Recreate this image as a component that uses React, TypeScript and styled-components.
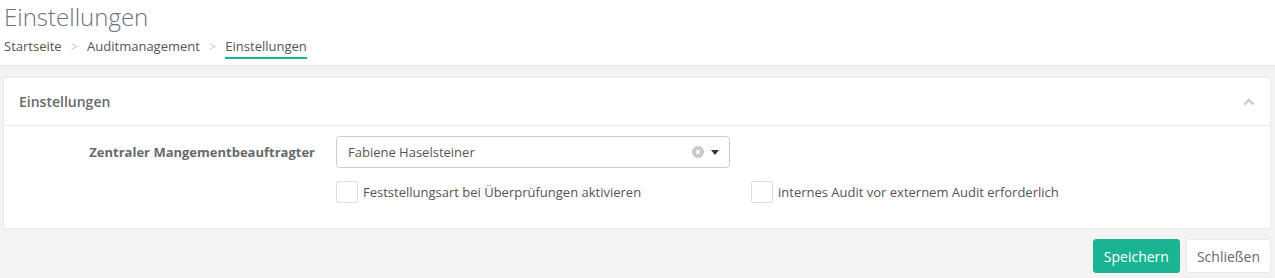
import React from "react";
import styled, { createGlobalStyle } from "styled-components";

const Global = createGlobalStyle`
  html, body { margin: 0; padding: 0; background: #f3f3f4; }
  body { font-family: "Open Sans", "Liberation Sans", sans-serif; color: #676a6c; }
  * { box-sizing: border-box; }
`;

const Page = styled.div`
  width: 1275px;
  height: 278px;
  background: #f3f3f4;
  overflow: hidden;
`;

const Heading = styled.div`
  background: #fff;
  height: 66px;
  padding: 2px 4px 0;
  border-bottom: 1px solid #e7eaec;
`;

const Title = styled.h2`
  margin: 0;
  font-size: 24px;
  font-weight: 300;
  line-height: 29px;
  color: #6b7380;
`;

const Crumbs = styled.ol`
  display: flex;
  list-style: none;
  margin: 5px 0 0;
  padding: 0;
  font-size: 13px;
  line-height: 20px;
  color: #555;
`;

const Crumb = styled.li<{ $active?: boolean }>`
  display: flex;
  align-items: center;
  span {
    border-bottom: 2px solid ${(p) => (p.$active ? "#1ab394" : "transparent")};
    padding-bottom: 1px;
  }
  &:not(:last-child)::after {
    content: ">";
    color: #ccc;
    padding: 0 9px 3px 9px;
  }
`;

const Body = styled.div`
  padding: 11px 4px 0 3px;
`;

const Panel = styled.section`
  background: #fff;
  border: 1px solid #e7eaec;
`;

const PanelHeader = styled.div`
  display: flex;
  align-items: center;
  justify-content: space-between;
  height: 48px;
  padding: 0 15px;
  border-bottom: 1px solid #e7eaec;
`;

const PanelTitle = styled.h5`
  margin: 0;
  font-size: 14px;
  font-weight: 600;
  color: #676a6c;
`;

const Collapse = styled.button`
  border: 0;
  background: none;
  padding: 0;
  display: flex;
  color: #c4c4c4;
`;

const PanelBody = styled.div`
  padding: 10px 15px 25px;
`;

const FormRow = styled.div`
  display: grid;
  grid-template-columns: 296px 394px;
  column-gap: 21px;
  align-items: center;
`;

const Label = styled.label`
  text-align: right;
  font-size: 13px;
  font-weight: 700;
  color: #676a6c;
  padding-bottom: 1px;
`;

const Select = styled.div`
  height: 32px;
  border: 1px solid #ccc;
  border-radius: 4px;
  display: flex;
  align-items: center;
  padding: 0 10px 0 11px;
  font-size: 13px;
  color: #555;
`;

const SelectValue = styled.span`
  flex: 1;
`;

const Clear = styled.span`
  width: 12px;
  height: 12px;
  border-radius: 50%;
  background: #c8c8c8;
  display: inline-flex;
  align-items: center;
  justify-content: center;
  margin-right: 7px;
`;

const Caret = styled.span`
  width: 0;
  height: 0;
  border-left: 4px solid transparent;
  border-right: 4px solid transparent;
  border-top: 5px solid #333;
`;

const CheckRow = styled.div`
  display: flex;
  margin: 13px 0 0 317px;
`;

const Check = styled.label<{ $width?: number }>`
  display: flex;
  align-items: center;
  width: ${(p) => (p.$width ? `${p.$width}px` : "auto")};
  font-size: 13px;
  color: #555;
`;

const Box = styled.span`
  width: 22px;
  height: 22px;
  border: 1px solid #ddd;
  border-radius: 2px;
  margin-right: 5px;
  background: #fff;
`;

const Footer = styled.div`
  display: flex;
  justify-content: flex-end;
  gap: 6px;
  padding: 10px 0 0;
`;

const Button = styled.button<{ $primary?: boolean }>`
  height: 34px;
  padding: 0 10px;
  font-family: "Open Sans", "Liberation Sans", sans-serif;
  font-size: 14px;
  border-radius: 3px;
  border: 1px solid ${(p) => (p.$primary ? "#1ab394" : "#e7eaec")};
  background: ${(p) => (p.$primary ? "#1ab394" : "#fff")};
  color: ${(p) => (p.$primary ? "#fff" : "#676a6c")};
`;

export default function App() {
  return (
    <Page>
      <Global />
      <Heading>
        <Title>Einstellungen</Title>
        <Crumbs>
          <Crumb><span>Startseite</span></Crumb>
          <Crumb><span>Auditmanagement</span></Crumb>
          <Crumb $active><span>Einstellungen</span></Crumb>
        </Crumbs>
      </Heading>
      <Body>
        <Panel>
          <PanelHeader>
            <PanelTitle>Einstellungen</PanelTitle>
            <Collapse aria-label="Einklappen">
              <svg width="12" height="8" viewBox="0 0 12 8">
                <path d="M1.5 6.5 L6 2 L10.5 6.5" fill="none" stroke="currentColor" strokeWidth="2" />
              </svg>
            </Collapse>
          </PanelHeader>
          <PanelBody>
            <FormRow>
              <Label>Zentraler Mangementbeauftragter</Label>
              <Select>
                <SelectValue>Fabiene Haselsteiner</SelectValue>
                <Clear>
                  <svg width="6" height="6" viewBox="0 0 6 6">
                    <path d="M1 1 L5 5 M5 1 L1 5" stroke="#fff" strokeWidth="1.4" />
                  </svg>
                </Clear>
                <Caret />
              </Select>
            </FormRow>
            <CheckRow>
              <Check $width={415}>
                <Box />
                Feststellungsart bei Überprüfungen aktivieren
              </Check>
              <Check>
                <Box />
                internes Audit vor externem Audit erforderlich
              </Check>
            </CheckRow>
          </PanelBody>
        </Panel>
        <Footer>
          <Button $primary>Speichern</Button>
          <Button>Schließen</Button>
        </Footer>
      </Body>
    </Page>
  );
}
